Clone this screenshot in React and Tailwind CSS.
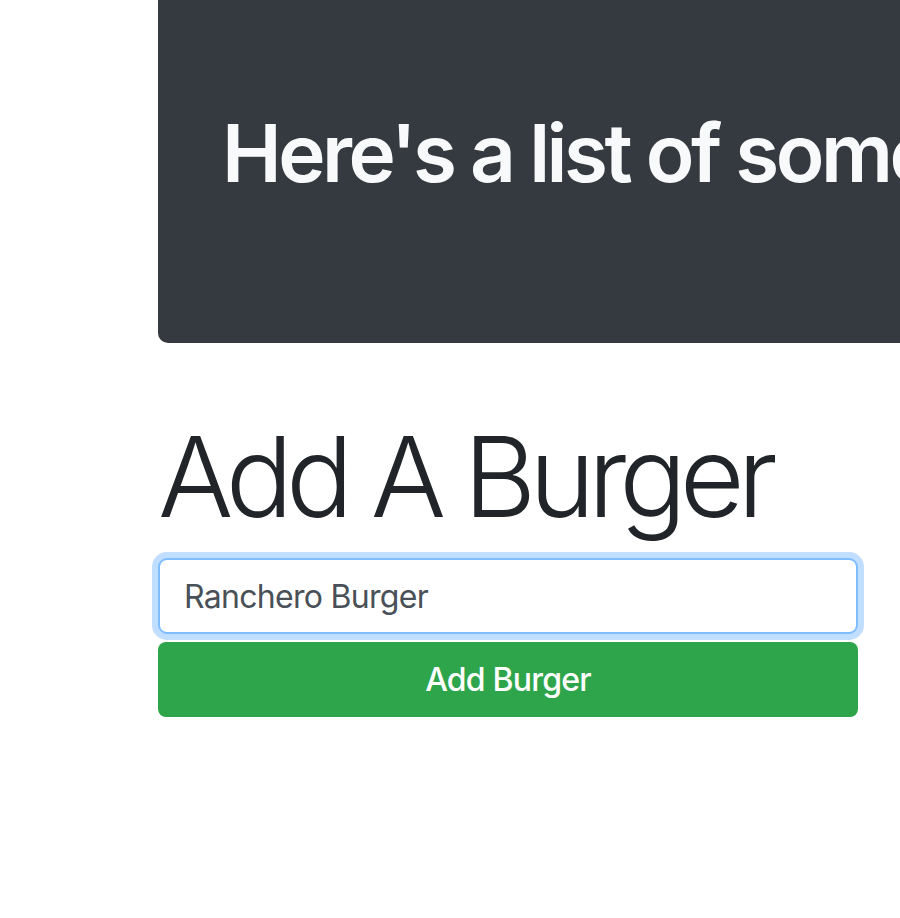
import React, { useState } from 'react';

const App = () => {
    const [burger, setBurger] = useState('Ranchero Burger');

    return (
        <div className="w-full h-screen overflow-hidden bg-white" style={{ fontFamily: 'Inter, "Noto Sans", sans-serif' }}>
            <div className="pl-[158px]">
                {/* jumbotron, scrolled so its top is off screen */}
                <div className="w-[1300px] h-[343px] bg-[#343a40] rounded-b-[10px] pt-[105px] pl-[64px]">
                    <h1 className="text-[80px] leading-[96px] font-semibold text-[#f8f9fa] tracking-[-3.5px] whitespace-nowrap">
                        Here's a list of some burgers
                    </h1>
                </div>

                <h2 className="mt-[66px] mb-[15px] text-[112px] leading-[134px] font-light text-[#212529] tracking-[-7.1px] whitespace-nowrap">
                    Add A Burger
                </h2>

                <form className="w-[700px]" onSubmit={(e) => e.preventDefault()}>
                    <input
                        type="text"
                        value={burger}
                        onChange={(e) => setBurger(e.target.value)}
                        className="block w-full h-[76px] px-[24px] text-[32px] tracking-[-0.7px] text-[#495057] bg-white border-2 border-[#80bdff] rounded-[9px] ring-[6px] ring-[#c0deff] outline-none"
                    />
                    <button
                        type="submit"
                        className="block w-full h-[75px] mt-[8px] bg-[#2fa54b] text-white text-[32px] tracking-[-0.8px] font-medium rounded-[8px]"
                    >
                        Add Burger
                    </button>
                </form>
            </div>
        </div>
    );
};

export default App;
